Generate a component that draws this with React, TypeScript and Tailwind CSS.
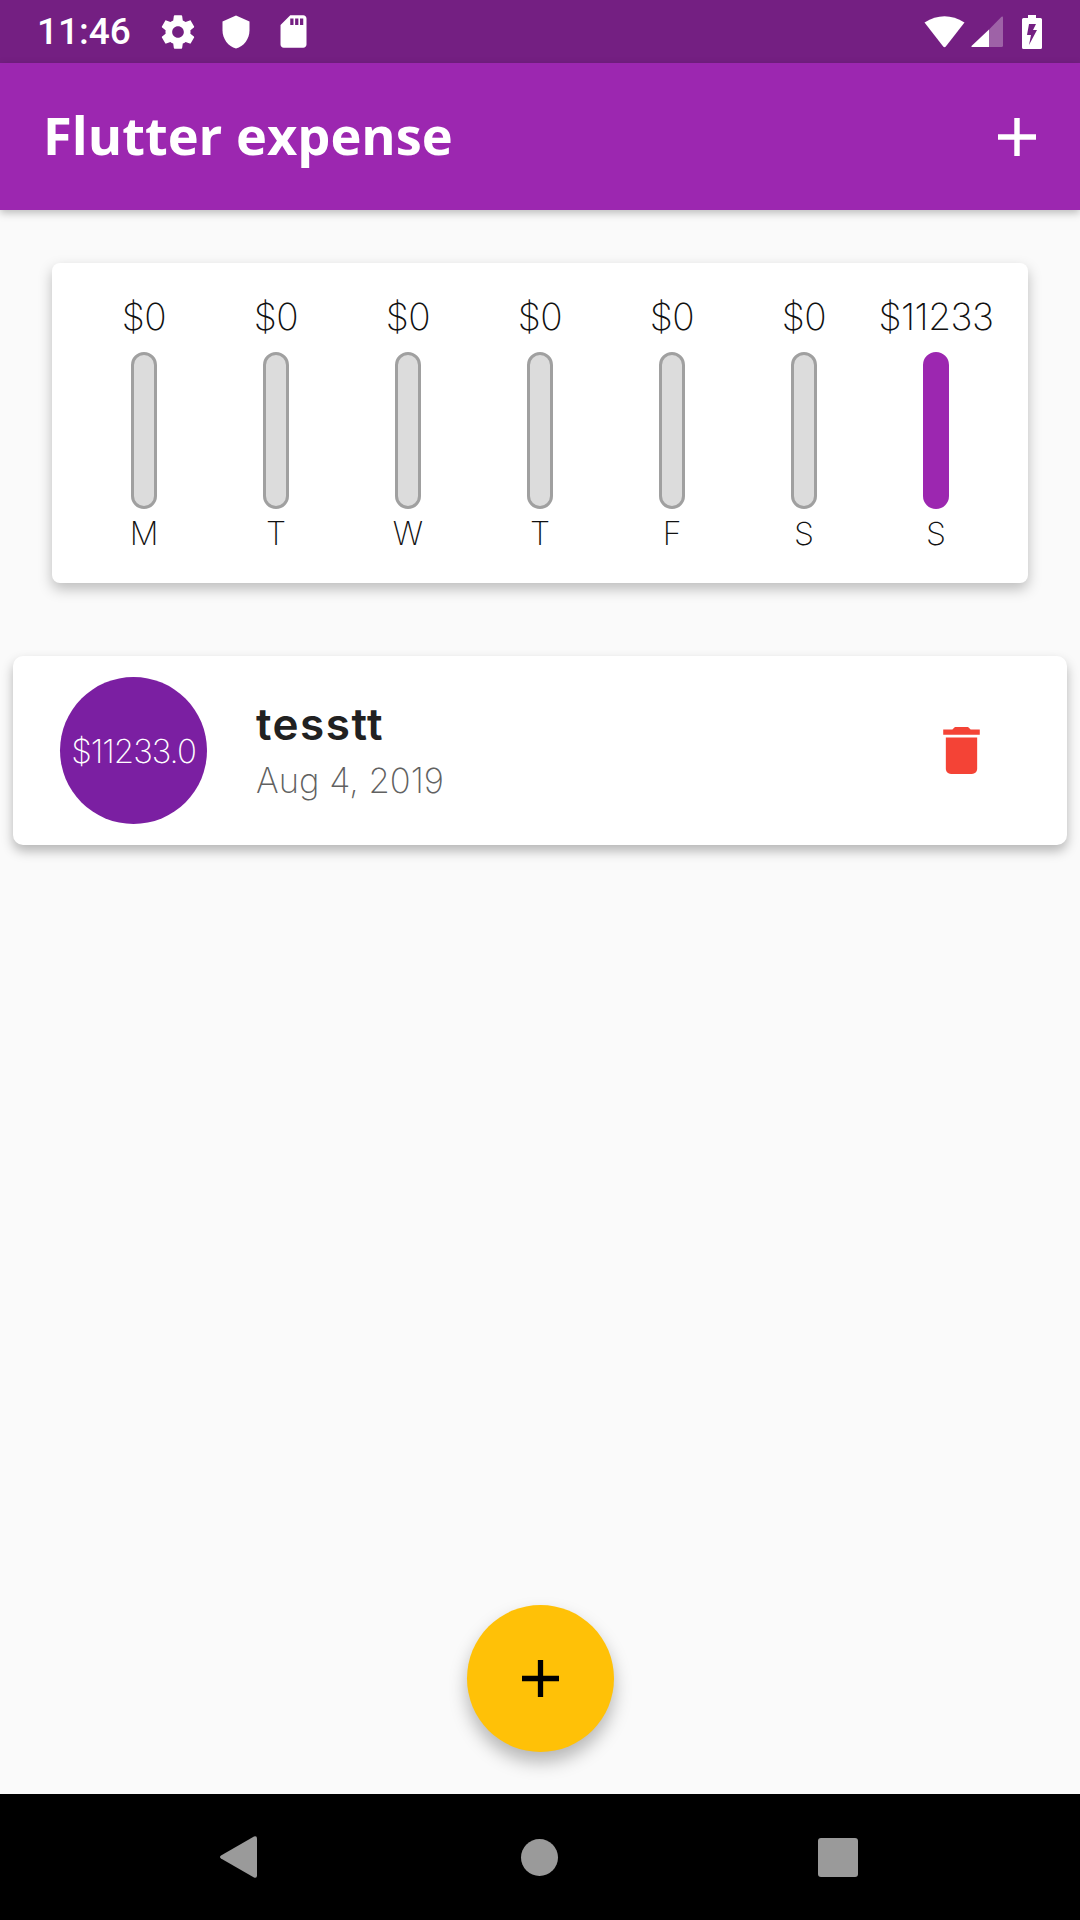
import React from 'react';

const days = [
  { label: 'M', amount: '$0', filled: false },
  { label: 'T', amount: '$0', filled: false },
  { label: 'W', amount: '$0', filled: false },
  { label: 'T', amount: '$0', filled: false },
  { label: 'F', amount: '$0', filled: false },
  { label: 'S', amount: '$0', filled: false },
  { label: 'S', amount: '$11233', filled: true },
];

const PlusIcon = ({ className }: { className: string }) => (
  <svg viewBox="5 5 14 14" className={className} fill="currentColor">
    <path d="M19 13h-6v6h-2v-6H5v-2h6V5h2v6h6v2z" />
  </svg>
);

const StatusBar = () => (
  <div className="h-[63px] shrink-0 bg-[#741f82] flex items-center justify-between pl-[37px] pr-[38px] text-white">
    <div className="flex items-center">
      <span className="font-['Roboto',sans-serif] font-medium text-[37px] leading-none w-[93px] mr-[28px]">11:46</span>
      <div className="flex items-center gap-[20px]">
        <svg viewBox="0 0 24 24" className="w-[40px] h-[40px]" fill="currentColor">
          <path d="M19.43 12.98c.04-.32.07-.64.07-.98s-.03-.66-.07-.98l2.11-1.65c.19-.15.24-.42.12-.64l-2-3.46c-.12-.22-.39-.3-.61-.22l-2.49 1c-.52-.4-1.08-.73-1.69-.98l-.38-2.65C14.46 2.18 14.25 2 14 2h-4c-.25 0-.46.18-.49.42l-.38 2.65c-.61.25-1.17.59-1.69.98l-2.49-1c-.23-.09-.49 0-.61.22l-2 3.46c-.13.22-.07.49.12.64l2.11 1.65c-.04.32-.07.65-.07.98s.03.66.07.98l-2.11 1.65c-.19.15-.24.42-.12.64l2 3.46c.12.22.39.3.61.22l2.49-1c.52.4 1.08.73 1.69.98l.38 2.65c.03.24.24.42.49.42h4c.25 0 .46-.18.49-.42l.38-2.65c.61-.25 1.17-.59 1.69-.98l2.49 1c.23.09.49 0 .61-.22l2-3.46c.12-.22.07-.49-.12-.64l-2.11-1.65zM12 15.5c-1.93 0-3.5-1.57-3.5-3.5s1.57-3.5 3.5-3.5 3.5 1.57 3.5 3.5-1.57 3.5-3.5 3.5z" />
        </svg>
        <svg viewBox="0 0 24 24" className="w-[36px] h-[36px]" fill="currentColor">
          <path d="M12 1L3 5v6c0 5.55 3.84 10.74 9 12 5.16-1.26 9-6.45 9-12V5l-9-4z" />
        </svg>
        <svg viewBox="0 0 24 24" className="w-[39px] h-[39px]" fill="currentColor">
          <path d="M18 2h-8L4.02 8 4 20c0 1.1.9 2 2 2h12c1.1 0 2-.9 2-2V4c0-1.1-.9-2-2-2zm-6 6h-2V4h2v4zm3 0h-2V4h2v4zm3 0h-2V4h2v4z" />
        </svg>
      </div>
    </div>
    <div className="flex items-center">
      <svg viewBox="0 0 41 33" className="w-[41px] h-[33px] mr-[6px]" fill="currentColor">
        <path d="M0.5 7.500 Q20.500 -5 40.500 7.500 L21.800 31.500 q-1.300 1.500 -2.600 0 Z" />
      </svg>
      <svg viewBox="0 0 32 31" className="w-[32px] h-[31px] mr-[19px]" fill="currentColor">
        <path d="M18 13.500 L0.500 30 q-.5 1 .5 1 H18 Z" />
        <path d="M18 13.500 L30.500 .8 q1.500 -1 1.500 .7 V29.500 q0 1.500 -1.500 1.500 H18 Z" fillOpacity="0.3" />
      </svg>
      <svg viewBox="0 0 20 34" className="w-[20px] h-[34px]" fill="currentColor">
        <path
          fillRule="evenodd"
          d="M6 0h8v3h4.500q1.500 0 1.500 1.500V32.500q0 1.500 -1.500 1.500H1.500q-1.500 0 -1.500 -1.500V4.500q0 -1.500 1.500 -1.500H6zM7 9L5 20h4l-2 10 8 -15h-4l3 -6z"
        />
      </svg>
    </div>
  </div>
);

const ChartCard = () => (
  <div className="mx-[52px] mt-[53px] h-[320px] rounded-[8px] bg-white shadow-[0_6px_14px_rgba(0,0,0,0.25)] px-[26px] pt-[29px]">
    <div className="grid grid-cols-7">
      {days.map((day, index) => (
        <div key={index} className="flex flex-col items-center">
          <div className="h-[48px] flex items-center text-[37px] leading-none tracking-[-0.5px] font-extralight text-[#111111]">{day.amount}</div>
          <div
            className={`mt-[12px] w-[26px] h-[157px] rounded-[13px] border-[3px] ${
              day.filled ? 'bg-[#9c27b0] border-[#9c27b0]' : 'bg-[#dcdcdc] border-[#a0a0a0]'
            }`}
          />
          <div className="mt-[7px] h-[36px] flex items-center text-[32px] leading-none font-extralight text-[#111111]">{day.label}</div>
        </div>
      ))}
    </div>
  </div>
);

const ExpenseCard = () => (
  <div className="mx-[13px] mt-[73px] h-[189px] rounded-[10px] bg-white shadow-[0_6px_12px_rgba(0,0,0,0.28)] flex items-center pl-[47px] pr-[87px]">
    <div className="w-[147px] h-[147px] pt-[2px] rounded-full bg-[#7b1fa2] text-white flex items-center justify-center text-[33px] tracking-[-1px] font-extralight shrink-0">
      $11233.0
    </div>
    <div className="ml-[49px] flex-1 flex flex-col">
      <span className="text-[44px] leading-[50px] tracking-[1.5px] font-semibold text-[#212121] mb-[9px]">tesstt</span>
      <span className="text-[34.6px] leading-[44px] font-extralight text-[#616161]">Aug 4, 2019</span>
    </div>
    <svg viewBox="5 3 14 18" className="w-[37px] h-[47px] text-[#f44336]" fill="currentColor">
      <path d="M6 19c0 1.100.9 2 2 2h8c1.100 0 2-.9 2-2V7H6v12zM19 4h-3.500l-1-1h-5l-1 1H5v2h14V4z" />
    </svg>
  </div>
);

const App = () => {
  return (
    <div className="w-[1080px] h-[1920px] flex flex-col overflow-hidden bg-[#fafafa] font-['Inter',sans-serif]">
      <StatusBar />
      <div className="relative z-10 h-[147px] shrink-0 bg-[#9c27b0] shadow-[0_3px_8px_rgba(0,0,0,0.25)] flex items-center justify-between pl-[43px] pr-[44px] text-white">
        <h1 className="font-['Open_Sans',sans-serif] font-bold text-[52.4px] leading-none mb-[3px]">Flutter expense</h1>
        <PlusIcon className="w-[38px] h-[38px]" />
      </div>
      <div className="relative flex-1">
        <ChartCard />
        <ExpenseCard />
        <button className="absolute left-[467px] top-[1395px] w-[147px] h-[147px] rounded-full bg-[#ffc107] text-black flex items-center justify-center shadow-[0_10px_18px_rgba(0,0,0,0.28)]">
          <PlusIcon className="w-[37px] h-[37px]" />
        </button>
      </div>
      <div className="h-[126px] shrink-0 bg-black flex items-center justify-center pr-[2px]">
        <svg viewBox="0 0 37 42" className="w-[37px] h-[42px] text-[#9a9a9a]" fill="currentColor">
          <path d="M1 19.500 L34 .5 q3 -1 3 2 V39.500 q0 3 -3 2 L1 22.500 q-2 -1.500 0 -3 Z" />
        </svg>
        <div className="ml-[264px] w-[37px] h-[37px] rounded-full bg-[#9a9a9a]" />
        <div className="ml-[260px] w-[40px] h-[39px] rounded-[3px] bg-[#9a9a9a]" />
      </div>
    </div>
  );
};

export default App;
